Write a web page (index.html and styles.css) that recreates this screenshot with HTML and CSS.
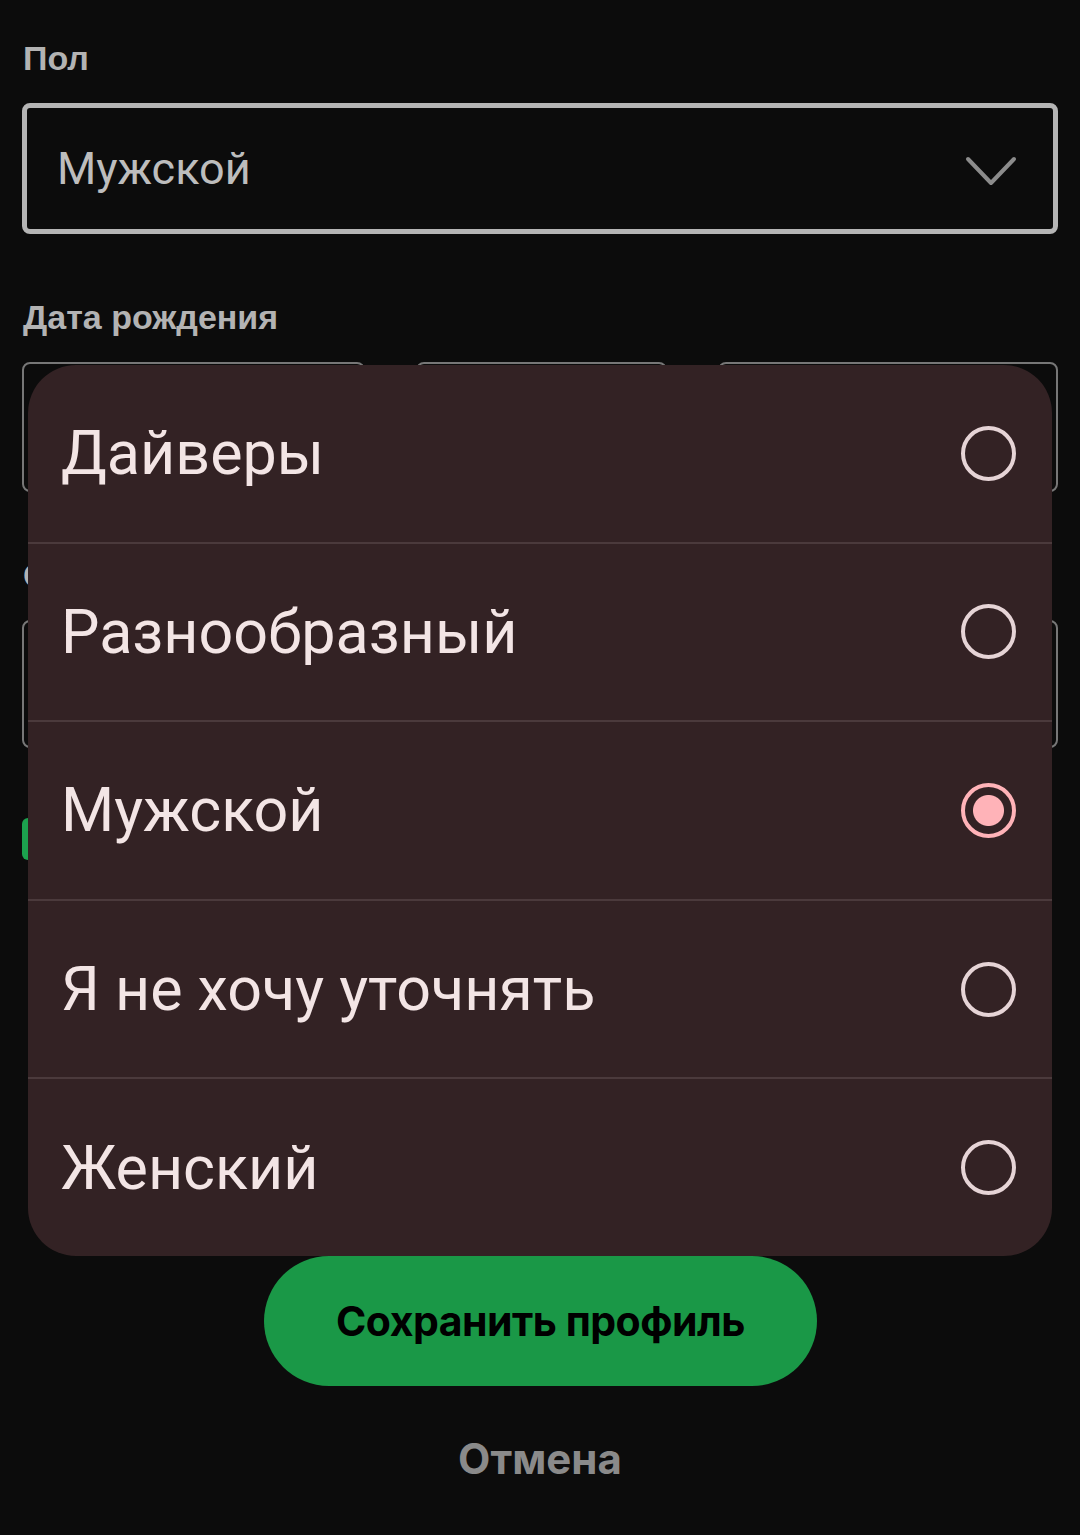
FILE: index.html
```html
<!DOCTYPE html>
<html lang="ru">
<head>
  <meta charset="UTF-8" />
  <meta name="viewport" content="width=device-width, initial-scale=1" />
  <title>Редактировать профиль</title>
  <link rel="stylesheet" href="styles.css">
</head>
<body>

  <div class="profile-form">
    <div class="field">
      <label class="field-label">Пол</label>
      <div class="select-box">
        <span>Мужской</span>
        <svg class="chevron" width="52" height="32" viewBox="0 0 52 32">
          <polyline points="3,4 26,28 49,4" fill="none" stroke="#8c8c8c" stroke-width="4" stroke-linecap="round" stroke-linejoin="round" />
        </svg>
      </div>
    </div>

    <div class="field">
      <label class="field-label">Дата рождения</label>
      <div class="date-row">
        <div class="date-box day"></div>
        <div class="date-box month"></div>
        <div class="date-box year"></div>
      </div>
    </div>

    <div class="field">
      <label class="field-label">Страна</label>
      <div class="input-box"></div>
    </div>

    <div class="check-row">
      <span class="checkbox"></span>
    </div>

    <div class="actions">
      <button class="save-btn">Сохранить профиль</button>
      <button class="cancel-btn">Отмена</button>
    </div>
  </div>

  <!-- Gender picker popup -->
  <div class="picker">
    <div class="picker-item">
      <span>Дайверы</span>
      <span class="radio"></span>
    </div>
    <div class="picker-item">
      <span>Разнообразный</span>
      <span class="radio"></span>
    </div>
    <div class="picker-item">
      <span>Мужской</span>
      <span class="radio checked"></span>
    </div>
    <div class="picker-item">
      <span>Я не хочу уточнять</span>
      <span class="radio"></span>
    </div>
    <div class="picker-item">
      <span>Женский</span>
      <span class="radio"></span>
    </div>
  </div>

</body>
</html>
```

FILE: styles.css
```css
body {
  margin: 0;
  background: #0c0c0c;
  font-family: "Liberation Sans", Arial, sans-serif;
  width: 1080px;
  height: 1535px;
  position: relative;
  overflow: hidden;
}

.profile-form {
  padding: 38px 22px 0 22px;
}

.field {
  margin-bottom: 63px;
}

.field-label {
  display: block;
  color: #b3b3b3;
  font-weight: bold;
  font-size: 34px;
  line-height: 40px;
  margin-left: 1px;
  margin-bottom: 25px;
}

.select-box {
  height: 121px;
  border: 5px solid #b5b5b5;
  border-radius: 8px;
  display: flex;
  align-items: center;
  justify-content: space-between;
  padding: 0 36px 0 30px;
  color: #bdbdbd;
  font-family: Roboto, sans-serif;
  font-size: 45px;
}

.chevron {
  margin-top: 4px;
}

.date-row {
  display: flex;
  gap: 51px;
}

.date-box {
  height: 126px;
  border: 2px solid #777;
  border-radius: 8px;
}

.date-box.day { width: 339px; }
.date-box.month { width: 247px; }
.date-box.year { flex: 1; }

.input-box {
  height: 124px;
  border: 2px solid #777;
  border-radius: 8px;
}

.check-row {
  display: flex;
  align-items: center;
  gap: 20px;
  margin-top: 70px;
}

.checkbox {
  width: 42px;
  height: 42px;
  border-radius: 6px;
  background: #1ca14e;
}

.actions {
  display: flex;
  flex-direction: column;
  align-items: center;
  margin-top: 396px;
}

.save-btn {
  width: 553px;
  height: 130px;
  border: none;
  border-radius: 65px;
  background: #1a9847;
  color: #000;
  font-family: Inter, sans-serif;
  font-weight: 700;
  font-size: 41px;
  letter-spacing: -0.5px;
  margin-left: 1px;
}

.cancel-btn {
  margin-top: 46px;
  background: none;
  border: none;
  color: #8a8a8a;
  font-family: Inter, sans-serif;
  font-weight: 700;
  font-size: 42px;
}

/* popup */
.picker {
  position: absolute;
  top: 365px;
  left: 28px;
  width: 1024px;
  height: 891px;
  background: #332224;
  border-radius: 48px;
  overflow: hidden;
  display: flex;
  flex-direction: column;
}

.picker-item {
  flex: 1;
  display: flex;
  align-items: center;
  justify-content: space-between;
  padding: 0 36px 0 33px;
  color: #f3e5e5;
  font-family: Roboto, sans-serif;
  font-size: 61px;
  border-top: 2px solid #4b3a3c;
}

.picker-item:first-child {
  border-top: none;
}

.radio {
  width: 47px;
  height: 47px;
  border: 4px solid #e6d4d6;
  border-radius: 50%;
  box-sizing: content-box;
}

.radio.checked {
  border-color: #ffb3b8;
  background: radial-gradient(circle, #ffb3b8 0 15px, transparent 16px);
}
```
